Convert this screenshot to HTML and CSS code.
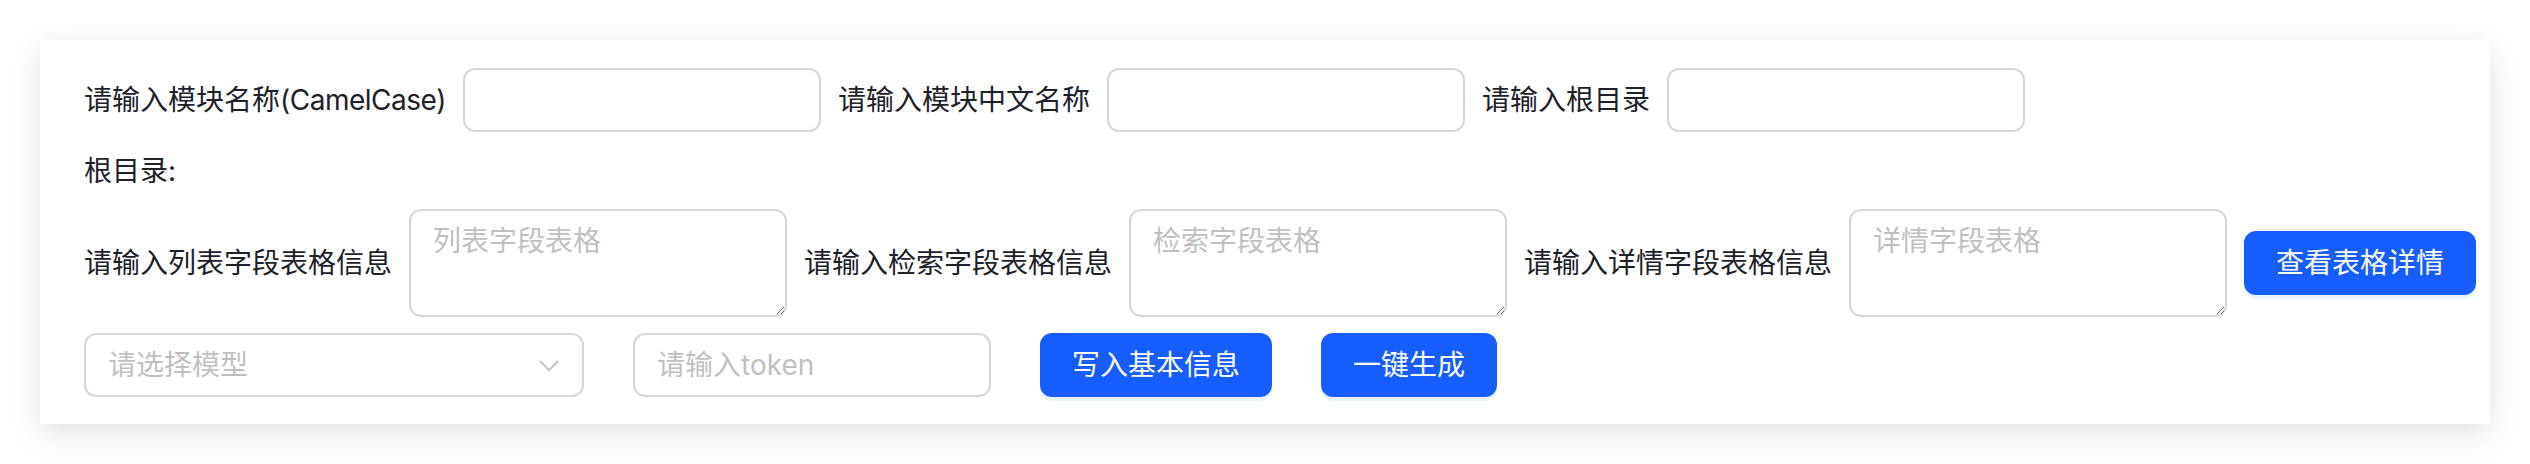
FILE: index.html
```html
<!DOCTYPE html>
<html lang="zh-CN">
<head>
<meta charset="utf-8">
<title>模块生成</title>
<link rel="stylesheet" href="styles.css">
</head>
<body>
<div class="card">
  <div class="row row-top">
    <span class="label">请输入模块名称<span class="latin">(CamelCase)</span></span>
    <input class="input input-md" type="text">
    <span class="label">请输入模块中文名称</span>
    <input class="input input-md" type="text">
    <span class="label">请输入根目录</span>
    <input class="input input-md" type="text">
  </div>
  <div class="row row-root">
    <span class="label">根目录:</span>
  </div>
  <div class="row row-tables">
    <span class="label">请输入列表字段表格信息</span>
    <textarea class="textarea" rows="2" placeholder="列表字段表格"></textarea>
    <span class="label">请输入检索字段表格信息</span>
    <textarea class="textarea" rows="2" placeholder="检索字段表格"></textarea>
    <span class="label">请输入详情字段表格信息</span>
    <textarea class="textarea" rows="2" placeholder="详情字段表格"></textarea>
    <button class="btn" type="button">查看表格详情</button>
  </div>
  <div class="row row-actions">
    <div class="select">
      <span class="select-placeholder">请选择模型</span>
      <svg class="select-arrow" viewBox="0 0 24 14" width="24" height="14" aria-hidden="true">
        <polyline points="2,2 12,12 22,2" fill="none" stroke="#bfbfbf" stroke-width="2"/>
      </svg>
    </div>
    <input class="input input-token" type="text" placeholder="请输入token">
    <button class="btn" type="button">写入基本信息</button>
    <button class="btn" type="button">一键生成</button>
  </div>
</div>
</body>
</html>
```
FILE: styles.css
```css
html, body {
  margin: 0;
  padding: 0;
  background: #ffffff;
}

body {
  font-family: Inter, "Noto Sans CJK SC", sans-serif;
  font-size: 28px;
  line-height: 44px;
  color: #1d2129;
}

.card {
  margin: 40px;
  width: 2450px;
  box-sizing: border-box;
  padding: 28px 44px 27px 44px;
  background: #ffffff;
  box-shadow: 0 12px 32px rgba(0, 0, 0, 0.09), 0 0 24px rgba(0, 0, 0, 0.04);
  display: flex;
  flex-direction: column;
  gap: 16px;
}

.row {
  display: flex;
  align-items: center;
  column-gap: 17px;
}

.row-root {
  height: 45px;
}

.label {
  white-space: nowrap;
  flex: none;
}

.latin {
  letter-spacing: -0.5px;
}

.input,
.textarea,
.select {
  box-sizing: border-box;
  border: 2px solid #d6d6d6;
  border-radius: 12px;
  background: #ffffff;
  font-family: Inter, "Noto Sans CJK SC", sans-serif;
  font-size: 28px;
  line-height: 44px;
  color: #1d2129;
  outline: none;
  margin: 0;
  flex: none;
}

.input {
  height: 64px;
  padding: 8px 22px;
}

.input-md {
  width: 358px;
}

.input-token {
  width: 358px;
}

.input::placeholder,
.textarea::placeholder {
  color: #bfbfbf;
}

.textarea {
  width: 378px;
  height: 108px;
  padding: 8px 22px;
  resize: vertical;
}

.btn {
  flex: none;
  height: 64px;
  padding: 0 30px;
  border: 2px solid #165dff;
  border-radius: 12px;
  background: #165dff;
  color: #ffffff;
  font-family: Inter, "Noto Sans CJK SC", sans-serif;
  font-size: 28px;
  line-height: 44px;
  box-shadow: 0 4px 0 rgba(5, 145, 255, 0.1);
  cursor: pointer;
}

.row-actions {
  column-gap: 49px;
}

.select {
  width: 500px;
  height: 64px;
  padding: 8px 22px;
  display: flex;
  align-items: center;
  justify-content: space-between;
}

.select-placeholder {
  color: #bfbfbf;
}

.select-arrow {
  width: 22px;
  height: 13px;
  flex: none;
}
```
